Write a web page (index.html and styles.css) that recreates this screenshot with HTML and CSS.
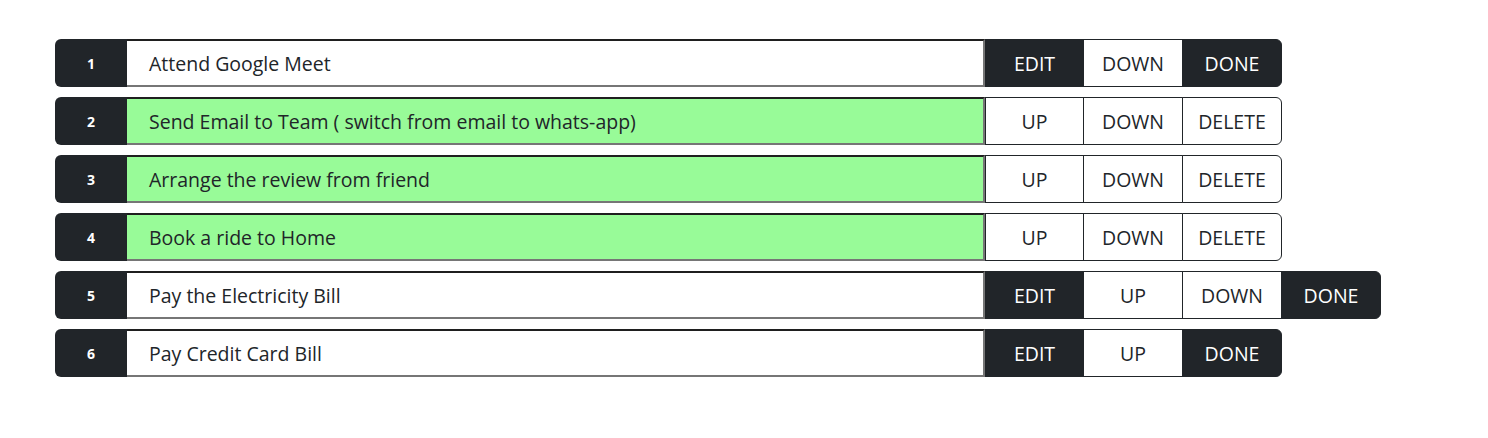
FILE: index.html
```html
<!DOCTYPE html>
<html>
<head>
<meta charset="utf-8">
<link rel="stylesheet" href="styles.css">
</head>
<body>
<div class="list">
  <div class="row">
    <span class="num">1</span>
    <div class="task">Attend Google Meet</div>
    <button class="btn dark">EDIT</button>
    <button class="btn outline">DOWN</button>
    <button class="btn dark last">DONE</button>
  </div>
  <div class="row">
    <span class="num">2</span>
    <div class="task done">Send Email to Team ( switch from email to whats-app)</div>
    <button class="btn outline">UP</button>
    <button class="btn outline">DOWN</button>
    <button class="btn outline last">DELETE</button>
  </div>
  <div class="row">
    <span class="num">3</span>
    <div class="task done">Arrange the review from friend</div>
    <button class="btn outline">UP</button>
    <button class="btn outline">DOWN</button>
    <button class="btn outline last">DELETE</button>
  </div>
  <div class="row">
    <span class="num">4</span>
    <div class="task done">Book a ride to Home</div>
    <button class="btn outline">UP</button>
    <button class="btn outline">DOWN</button>
    <button class="btn outline last">DELETE</button>
  </div>
  <div class="row">
    <span class="num">5</span>
    <div class="task">Pay the Electricity Bill</div>
    <button class="btn dark">EDIT</button>
    <button class="btn outline">UP</button>
    <button class="btn outline">DOWN</button>
    <button class="btn dark last">DONE</button>
  </div>
  <div class="row">
    <span class="num">6</span>
    <div class="task">Pay Credit Card Bill</div>
    <button class="btn dark">EDIT</button>
    <button class="btn outline">UP</button>
    <button class="btn dark last">DONE</button>
  </div>
</div>
</body>
</html>
```
FILE: styles.css
```css
* { box-sizing: border-box; }
body {
  margin: 0;
  background: #fff;
  font-family: "Open Sans", "Noto Sans", sans-serif;
  color: #212529;
}
.list {
  padding: 39px 0 0 55px;
  display: flex;
  flex-direction: column;
  gap: 10px;
}
.row {
  display: flex;
  height: 48px;
}
.num {
  width: 72px;
  background: #212529;
  color: #fff;
  font-weight: 700;
  font-size: 14px;
  display: flex;
  align-items: center;
  justify-content: center;
  border-radius: 6px 0 0 6px;
}
.task {
  width: 858px;
  border-style: solid;
  border-width: 2px 2px 2px 0;
  border-color: #1f1f1f #767676 #767676 #1f1f1f;
  padding: 0 22px;
  display: flex;
  align-items: center;
  font-size: 19.5px;
  background: #fff;
  color: #212529;
}
.task.done { background: #98fb98; }
.btn {
  width: 100px;
  margin: 0 0 0 -1px;
  font-family: inherit;
  font-size: 19.5px;
  border: 1px solid #212529;
  padding: 0;
  cursor: pointer;
}
.task + .btn { width: 99px; margin-left: 0; }
.dark { background: #212529; color: #fff; }
.outline { background: #fff; color: #212529; }
.last { border-radius: 0 6px 6px 0; }
```
